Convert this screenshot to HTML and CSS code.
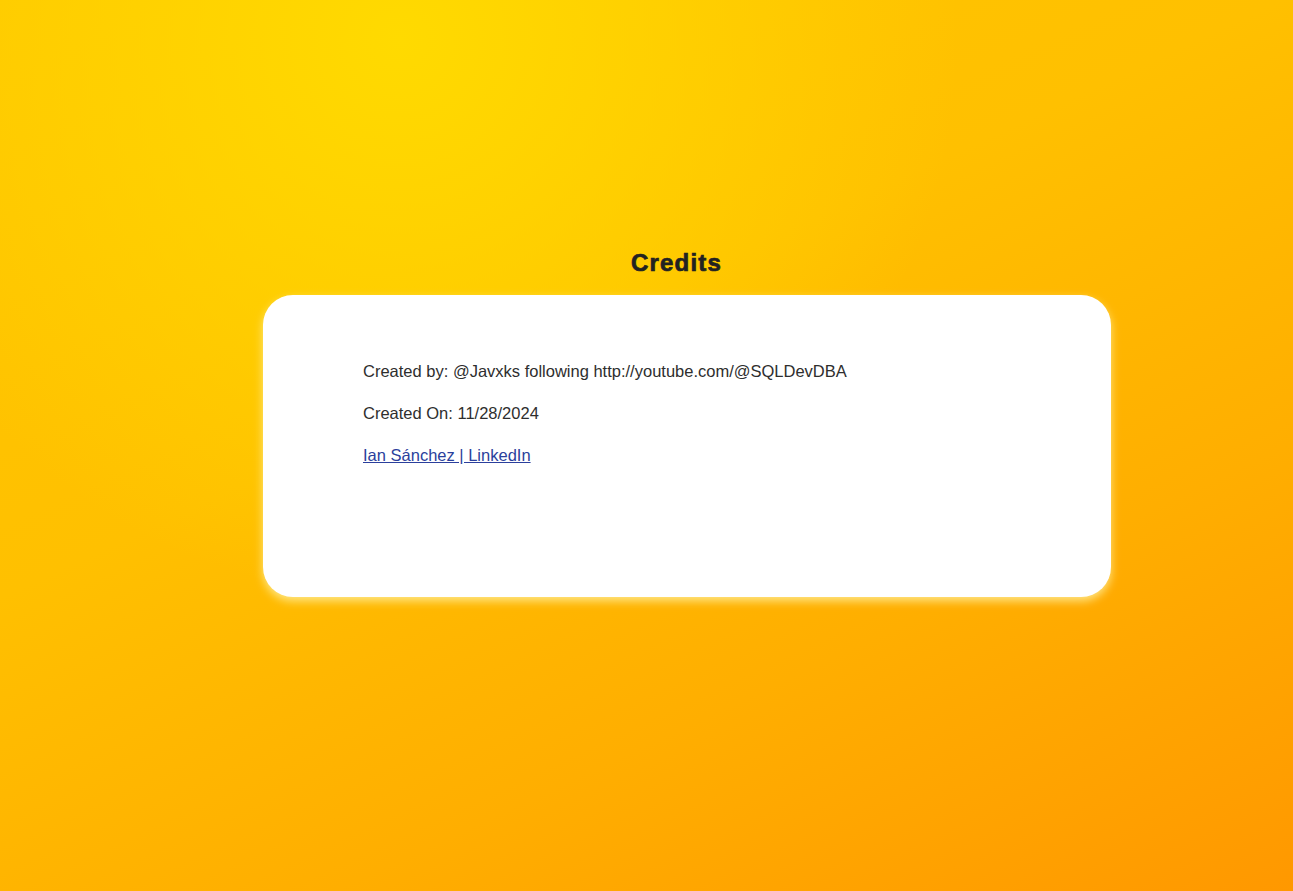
FILE: index.html
```html
<!DOCTYPE html>
<html lang="en">
<head>
<meta charset="utf-8">
<title>Credits</title>
<link rel="stylesheet" href="styles.css">
</head>
<body>
  <main class="page">
    <h1 class="title">Credits</h1>
    <section class="card">
      <p>Created by: @Javxks following http://youtube.com/@SQLDevDBA</p>
      <p>Created On: 11/28/2024</p>
      <p><a href="#">Ian Sánchez | LinkedIn</a></p>
    </section>
  </main>
</body>
</html>
```

FILE: styles.css
```css
html, body {
  margin: 0;
  padding: 0;
  height: 100%;
}
body {
  font-family: "Liberation Sans", Arial, sans-serif;
  color: #2e2e2e;
  background:
    radial-gradient(circle at 400px 40px, rgba(255, 218, 0, 1) 0px, rgba(255, 218, 0, 0) 560px),
    linear-gradient(155deg, #FFC800 0%, #FFC000 40%, #FFAE00 70%, #FF9800 100%);
  min-height: 891px;
}
.page {
  padding-top: 247px;
  padding-left: 60px;
  display: flex;
  flex-direction: column;
}
.title {
  margin: 2px 0 18px 0;
  text-align: center;
  font-size: 24px;
  line-height: 28px;
  font-weight: bold;
  letter-spacing: 1.2px;
  color: #222;
  -webkit-text-stroke: 0.7px #222;
}
.card {
  box-sizing: border-box;
  width: 848px;
  min-height: 302px;
  margin-left: 203px;
  padding: 47px 100px 48px;
  background: #fff;
  border-radius: 30px;
  box-shadow: 0 4px 10px rgba(255, 236, 150, 0.9);
}
.card p {
  margin: 16px 0;
  font-size: 16.5px;
  line-height: 26px;
}
.card a {
  color: #2b3f9c;
  text-decoration: underline;
}
```
